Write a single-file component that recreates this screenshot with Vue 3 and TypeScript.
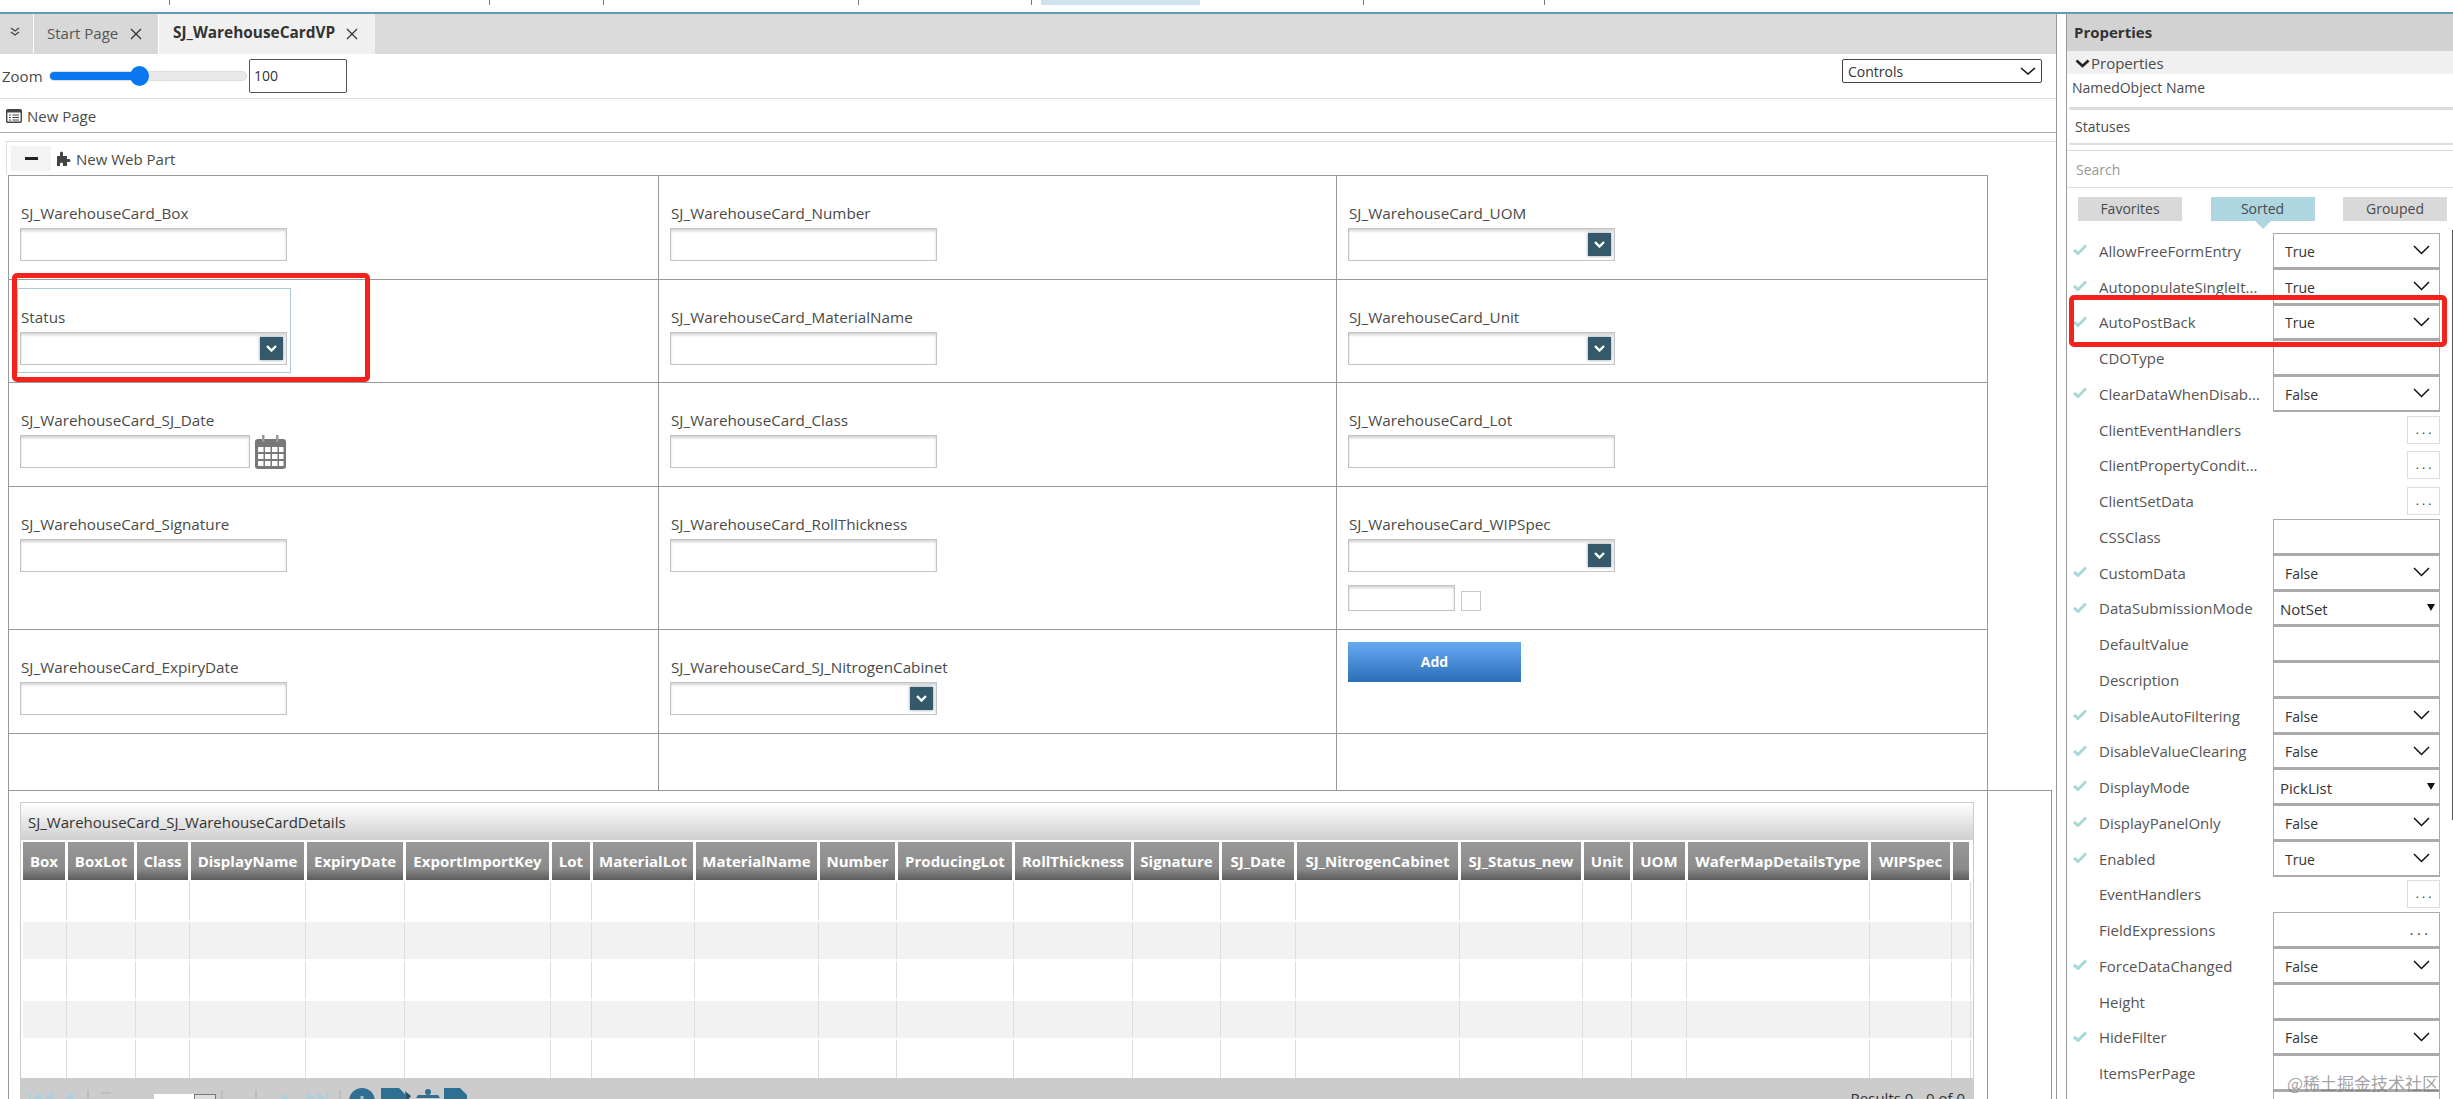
<script setup lang="ts">
type Field = { label?: string; kind?: 'input' | 'select' | 'date' | 'wip' | 'add'; selected?: boolean }
type Prop = { name: string; kind: 'drop' | 'pick' | 'text' | 'dots' | 'textdots'; value?: string; on?: boolean }

const tickGaps = [170, 320, 114, 255, 173, 332, 181]

const formRows: { h: number; cells: Field[] }[] = [
  { h: 104, cells: [{ label: 'SJ_WarehouseCard_Box', kind: 'input' }, { label: 'SJ_WarehouseCard_Number', kind: 'input' }, { label: 'SJ_WarehouseCard_UOM', kind: 'select' }] },
  { h: 103, cells: [{ label: 'Status', kind: 'select', selected: true }, { label: 'SJ_WarehouseCard_MaterialName', kind: 'input' }, { label: 'SJ_WarehouseCard_Unit', kind: 'select' }] },
  { h: 104, cells: [{ label: 'SJ_WarehouseCard_SJ_Date', kind: 'date' }, { label: 'SJ_WarehouseCard_Class', kind: 'input' }, { label: 'SJ_WarehouseCard_Lot', kind: 'input' }] },
  { h: 143, cells: [{ label: 'SJ_WarehouseCard_Signature', kind: 'input' }, { label: 'SJ_WarehouseCard_RollThickness', kind: 'input' }, { label: 'SJ_WarehouseCard_WIPSpec', kind: 'wip' }] },
  { h: 104, cells: [{ label: 'SJ_WarehouseCard_ExpiryDate', kind: 'input' }, { label: 'SJ_WarehouseCard_SJ_NitrogenCabinet', kind: 'select' }, { kind: 'add' }] },
  { h: 57, cells: [{}, {}, {}] },
]

const columns: [string, number][] = [
  ['Box', 45], ['BoxLot', 69], ['Class', 54], ['DisplayName', 116], ['ExpiryDate', 99], ['ExportImportKey', 146],
  ['Lot', 41], ['MaterialLot', 103], ['MaterialName', 124], ['Number', 78], ['ProducingLot', 117], ['RollThickness', 119],
  ['Signature', 88], ['SJ_Date', 75], ['SJ_NitrogenCabinet', 164], ['SJ_Status_new', 123], ['Unit', 49], ['UOM', 55],
  ['WaferMapDetailsType', 183], ['WIPSpec', 82], ['', 19],
]
const gridCols = columns.map((c) => c[1] + 'px').join(' ')
const rowHeights = [40, 39, 40, 39, 40]

const props: Prop[] = [
  { name: 'AllowFreeFormEntry', kind: 'drop', value: 'True', on: true },
  { name: 'AutopopulateSingleIt...', kind: 'drop', value: 'True', on: true },
  { name: 'AutoPostBack', kind: 'drop', value: 'True', on: true },
  { name: 'CDOType', kind: 'text' },
  { name: 'ClearDataWhenDisab...', kind: 'drop', value: 'False', on: true },
  { name: 'ClientEventHandlers', kind: 'dots' },
  { name: 'ClientPropertyCondit...', kind: 'dots' },
  { name: 'ClientSetData', kind: 'dots' },
  { name: 'CSSClass', kind: 'text' },
  { name: 'CustomData', kind: 'drop', value: 'False', on: true },
  { name: 'DataSubmissionMode', kind: 'pick', value: 'NotSet', on: true },
  { name: 'DefaultValue', kind: 'text' },
  { name: 'Description', kind: 'text' },
  { name: 'DisableAutoFiltering', kind: 'drop', value: 'False', on: true },
  { name: 'DisableValueClearing', kind: 'drop', value: 'False', on: true },
  { name: 'DisplayMode', kind: 'pick', value: 'PickList', on: true },
  { name: 'DisplayPanelOnly', kind: 'drop', value: 'False', on: true },
  { name: 'Enabled', kind: 'drop', value: 'True', on: true },
  { name: 'EventHandlers', kind: 'dots' },
  { name: 'FieldExpressions', kind: 'textdots' },
  { name: 'ForceDataChanged', kind: 'drop', value: 'False', on: true },
  { name: 'Height', kind: 'text' },
  { name: 'HideFilter', kind: 'drop', value: 'False', on: true },
  { name: 'ItemsPerPage', kind: 'text' },
  { name: 'MaxLength', kind: 'text' },
]
</script>

<template>
  <div class="screen">
    <div class="strip">
      <span v-for="(g, i) in tickGaps" :key="i" class="tick" :style="{ width: g + 'px' }"></span>
    </div>
    <div class="workspace">
      <div class="main">
        <div class="tabs">
          <div class="tab-menu">
            <svg width="12" height="10" viewBox="0 0 12 10" fill="none" stroke="#444" stroke-width="1.2"><path d="M2 1l4 3 4-3M2 5l4 3 4-3" /></svg>
          </div>
          <div class="tab">
            <span>Start Page</span>
            <svg class="close" width="14" height="14" viewBox="0 0 14 14" stroke="#333" stroke-width="1.3"><path d="M2 2l10 10M12 2L2 12" /></svg>
          </div>
          <div class="tab active">
            <span>SJ_WarehouseCardVP</span>
            <svg class="close" width="14" height="14" viewBox="0 0 14 14" stroke="#333" stroke-width="1.3"><path d="M2 2l10 10M12 2L2 12" /></svg>
          </div>
        </div>

        <div class="zoombar">
          <span class="zoom-label">Zoom</span>
          <div class="slider"><div class="slider-fill"></div><div class="slider-thumb"></div></div>
          <div class="zoom-input">100</div>
          <div class="controls">
            <span>Controls</span>
            <svg width="16" height="9" viewBox="0 0 16 9" fill="none" stroke="#111" stroke-width="1.5"><path d="M1 1l7 6 7-6" /></svg>
          </div>
        </div>

        <div class="pagebar">
          <svg width="16" height="14" viewBox="0 0 16 14"><rect x="0.7" y="0.7" width="14.6" height="12.6" rx="1" fill="none" stroke="#444" stroke-width="1.4" /><rect x="1" y="1" width="14" height="2.5" fill="#444" /><path d="M3 6h2M6.5 6h6.5M3 8.5h2M6.5 8.5h6.5M3 11h2M6.5 11h6.5" stroke="#444" /></svg>
          <span>New Page</span>
        </div>

        <div class="webpart">
          <div class="webpart-head">
            <div class="collapse"><span class="dash"></span></div>
            <svg width="16" height="15" viewBox="0 0 16 15" fill="#444"><path d="M1 5h3V2a1.5 1.5 0 0 1 3 0v3h4v3h2a1.5 1.5 0 0 1 0 3h-2v4H7v-2a1.5 1.5 0 0 0-3 0v2H1z" /></svg>
            <span>New Web Part</span>
          </div>

          <div class="form">
            <template v-for="(row, r) in formRows" :key="r">
              <div
                v-for="(cell, c) in row.cells"
                :key="c"
                class="cell"
                :class="{ addcell: cell.kind === 'add', selected: cell.selected }"
                :style="{ height: row.h + 'px' }"
              >
                <div v-if="cell.label" class="label">{{ cell.label }}</div>
                <div v-if="cell.kind === 'input'" class="input"></div>
                <div v-else-if="cell.kind === 'select' || cell.kind === 'wip'" class="input select">
                  <span class="arrow">
                    <svg width="11" height="8" viewBox="0 0 11 8" fill="none" stroke="#fff" stroke-width="2.4"><path d="M1 1l4.5 4.5L10 1" /></svg>
                  </span>
                </div>
                <div v-else-if="cell.kind === 'date'" class="date">
                  <div class="input narrow"></div>
                  <svg width="31" height="34" viewBox="0 0 31 34">
                    <rect x="0" y="4" width="31" height="30" rx="3" fill="#787878" />
                    <rect x="7" y="0" width="2.5" height="7" fill="#999" /><rect x="21" y="0" width="2.5" height="7" fill="#999" />
                    <g fill="#fff">
                      <rect x="3" y="12" width="5.5" height="5" /><rect x="10" y="12" width="5.5" height="5" /><rect x="17" y="12" width="5.5" height="5" /><rect x="24" y="12" width="4.5" height="5" />
                      <rect x="3" y="19" width="5.5" height="5" /><rect x="10" y="19" width="5.5" height="5" /><rect x="17" y="19" width="5.5" height="5" /><rect x="24" y="19" width="4.5" height="5" />
                      <rect x="3" y="26" width="5.5" height="5" /><rect x="10" y="26" width="5.5" height="5" /><rect x="17" y="26" width="5.5" height="5" /><rect x="24" y="26" width="4.5" height="5" />
                    </g>
                  </svg>
                </div>
                <div v-if="cell.kind === 'wip'" class="wip-extra">
                  <div class="input small"></div>
                  <div class="checkbox"></div>
                </div>
                <div v-if="cell.kind === 'add'" class="add">Add</div>
              </div>
            </template>
          </div>

          <div class="lower">
            <div class="lower-left">
              <div class="panel">
                <div class="panel-title">SJ_WarehouseCard_SJ_WarehouseCardDetails</div>
                <div class="grid-head" :style="{ gridTemplateColumns: gridCols }">
                  <div v-for="col in columns" :key="col[0]" class="th">{{ col[0] }}</div>
                </div>
                <div
                  v-for="(h, i) in rowHeights"
                  :key="i"
                  class="grid-row"
                  :class="{ alt: i % 2 === 1 }"
                  :style="{ gridTemplateColumns: gridCols, height: h + 'px' }"
                >
                  <div v-for="col in columns" :key="col[0]" class="td"></div>
                </div>
                <div class="pager">
                  <svg class="faint" width="122" height="16" viewBox="0 0 122 16" fill="#a9cfe0">
                    <rect x="0" y="3" width="2" height="10" /><path d="M12 3v10L4 8zM24 3v10l-8-5z" /><path d="M44 3v10l-8-5z" />
                    <rect x="58" y="0" width="2" height="16" fill="#bdbdbd" /><rect x="72" y="2" width="10" height="2" fill="#bdbdbd" />
                  </svg>
                  <div class="page-input"></div>
                  <div class="page-btn"></div>
                  <svg class="faint second" width="122" height="16" viewBox="0 0 122 16" fill="#a9cfe0">
                    <rect x="0" y="0" width="2" height="16" fill="#bdbdbd" /><rect x="34" y="0" width="2" height="16" fill="#bdbdbd" />
                    <path d="M60 3v10l8-5zM86 3v10l8-5zM96 3v10l8-5z" /><rect x="105" y="3" width="2" height="10" /><rect x="118" y="0" width="2" height="16" fill="#bdbdbd" />
                  </svg>
                  <svg class="tools" width="118" height="22" viewBox="0 0 118 22" fill="#2f6f91">
                    <circle cx="13" cy="14" r="13" /><rect x="11.5" y="9" width="3" height="12" fill="#9fc2d0" />
                    <path d="M32 1h18l8 8v13H32z" /><path d="M56 4l6 5-4 5z" fill="#244f66" />
                    <path d="M69 8h20l2 3H67zM71 12h16v10H71z" /><circle cx="79" cy="5" r="3" />
                    <path d="M95 1h16l7 7v14H95z" />
                  </svg>
                  <span class="results">Results 0 - 0 of 0</span>
                </div>
              </div>
            </div>
          </div>
        </div>
      </div>

      <aside class="side">
        <div class="side-title">Properties</div>
        <div class="side-sub">
          <svg width="15" height="9" viewBox="0 0 15 9" fill="none" stroke="#222" stroke-width="2.6"><path d="M1.5 1.5l6 5.5 6-5.5" /></svg>
          <span>Properties</span>
        </div>
        <div class="side-name">NamedObject Name</div>
        <div class="side-value">Statuses</div>
        <div class="side-search">Search</div>
        <div class="side-tabs">
          <div class="side-tab">Favorites</div>
          <div class="side-tab on">Sorted</div>
          <div class="side-tab">Grouped</div>
        </div>
        <div class="prop-list">
          <div v-for="p in props" :key="p.name" class="prop">
            <svg v-if="p.on" class="tick-mark" width="14" height="11" viewBox="0 0 14 11" fill="none" stroke="#a9d8d8" stroke-width="3"><path d="M1 6l4 3.5L13 1.5" /></svg>
            <span class="prop-name">{{ p.name }}</span>
            <div v-if="p.kind === 'drop'" class="prop-box">
              <span class="val">{{ p.value }}</span>
              <svg width="17" height="10" viewBox="0 0 17 10" fill="none" stroke="#111" stroke-width="1.5"><path d="M1 1l7.5 7.5L16 1" /></svg>
            </div>
            <div v-else-if="p.kind === 'pick'" class="prop-box pick">
              <span class="val">{{ p.value }}</span>
              <svg width="8" height="7" viewBox="0 0 8 7" fill="#111"><path d="M0 0h8L4 7z" /></svg>
            </div>
            <div v-else-if="p.kind === 'text'" class="prop-box"></div>
            <div v-else-if="p.kind === 'dots'" class="prop-dots"><span>. . .</span></div>
            <div v-else class="prop-box textdots"><span>. . .</span></div>
          </div>
        </div>
        <div class="side-scroll"></div>
      </aside>
    </div>

    <div class="status-frame"></div>
    <div class="red-box left-box"></div>
    <div class="red-box right-box"></div>
    <div class="watermark">@稀土掘金技术社区</div>
  </div>
</template>

<style scoped>
.screen {
  position: relative;
  width: 2453px;
  height: 1099px;
  overflow: hidden;
  background: #fff;
  font-family: "Open Sans", "Noto Sans", sans-serif;
  font-size: 15px;
  color: #4a4a4a;
  display: flex;
  flex-direction: column;
}
.strip {
  height: 12px;
  display: flex;
  align-items: flex-start;
  position: relative;
  background: linear-gradient(90deg, #fff 1041px, #cfe3ef 1041px, #cfe3ef 1200px, #fff 1200px) 0 0 / 100% 5px no-repeat;
}
.tick {
  height: 5px;
  border-right: 1px solid #777;
  box-sizing: border-box;
  flex: none;
}
.workspace {
  flex: 1;
  min-height: 0;
  display: flex;
  border-top: 2px solid #5f9db3;
}
.main {
  width: 2057px;
  flex: none;
  box-sizing: border-box;
  border-right: 1px solid #999;
  display: flex;
  flex-direction: column;
}
.tabs {
  height: 40px;
  background: #dadada;
  display: flex;
  flex: none;
}
.tab-menu {
  width: 34px;
  border-right: 1px solid #fff;
  padding: 7px 0 0 9px;
  box-sizing: border-box;
}
.tab {
  width: 125px;
  padding: 0 0 3px 13px;
  box-sizing: border-box;
  display: flex;
  align-items: center;
  gap: 11px;
  color: #555;
  background: #d8d8d8;
  border-right: 1px solid #fff;
}
.close {
  margin-top: 3px;
  flex: none;
}
.tab.active {
  width: 216px;
  padding-left: 14px;
  gap: 10px;
  background: #f0f0f0;
  border-right: 0;
  font-size: 15.4px;
  font-weight: 700;
  color: #333;
}
.zoombar {
  height: 44px;
  flex: none;
  display: flex;
  align-items: center;
  position: relative;
  border-bottom: 1px solid #ddd;
  box-sizing: content-box;
}
.zoom-label {
  width: 49px;
  padding-left: 2px;
  box-sizing: border-box;
}
.slider {
  position: relative;
  width: 198px;
  height: 10px;
  background: #e9e9e9;
  border: 1px solid #ddd;
  border-radius: 6px;
  box-sizing: border-box;
  margin-right: 2px;
}
.slider-fill {
  width: 88px;
  height: 100%;
  background: #0a76f0;
  border-radius: 6px;
}
.slider-thumb {
  position: absolute;
  left: 80px;
  top: -6px;
  width: 19px;
  height: 20px;
  border-radius: 50%;
  background: #0a76f0;
}
.zoom-input {
  width: 98px;
  height: 34px;
  border: 1px solid #555;
  border-radius: 2px;
  box-sizing: border-box;
  padding: 6px 4px;
  color: #333;
  font-size: 14px;
}
.controls {
  margin-left: auto;
  margin-right: 14px;
  margin-bottom: 10px;
  width: 200px;
  height: 24px;
  box-sizing: border-box;
  border: 1px solid #444;
  border-radius: 2px;
  padding: 0 5px;
  display: flex;
  align-items: center;
  justify-content: space-between;
  color: #333;
  font-size: 14px;
}
.pagebar {
  height: 33px;
  flex: none;
  display: flex;
  align-items: center;
  gap: 5px;
  padding-left: 6px;
  border-bottom: 1px solid #aaa;
}
.webpart {
  margin: 8px 0 0 6px;
  flex: 1;
  min-height: 0;
  border-top: 1px solid #ddd;
  display: flex;
  flex-direction: column;
}
.webpart-head {
  height: 33px;
  flex: none;
  display: flex;
  align-items: center;
  gap: 4px;
  padding-left: 4px;
  border-left: 1px solid #ddd;
  box-sizing: border-box;
}
.collapse {
  width: 40px;
  height: 25px;
  background: #f3f3f3;
  display: flex;
  align-items: center;
  justify-content: center;
  margin-right: 1px;
}
.dash {
  width: 13px;
  height: 3px;
  background: #222;
}
.form {
  margin-left: 2px;
  width: 1980px;
  box-sizing: border-box;
  border-left: 1px solid #999;
  display: grid;
  grid-template-columns: 650px 678px 651px;
  flex: none;
}
.cell {
  position: relative;
  box-sizing: border-box;
  border-top: 1px solid #999;
  border-right: 1px solid #999;
  padding: 28px 0 0 11px;
}
.cell.addcell {
  padding-top: 12px;
}
.label {
  height: 20px;
  line-height: 19px;
  margin-bottom: 4px;
  padding-left: 1px;
  font-size: 15.25px;
  white-space: nowrap;
}
.input {
  width: 267px;
  height: 33px;
  box-sizing: border-box;
  border: 1px solid #c4c4c4;
  box-shadow: inset 0 2px 3px rgba(0, 0, 0, 0.18);
  background: #fff;
}
.input.select {
  display: flex;
  align-items: center;
  justify-content: flex-end;
  padding-right: 3px;
}
.arrow {
  width: 23px;
  height: 23px;
  background: #33596b;
  box-shadow: 0 0 3px rgba(51, 89, 107, 0.6);
  display: flex;
  align-items: center;
  justify-content: center;
}
.date {
  display: flex;
  align-items: flex-start;
  gap: 5px;
}
.input.narrow {
  width: 230px;
}
.wip-extra {
  display: flex;
  align-items: flex-end;
  gap: 6px;
  margin-top: 13px;
}
.input.small {
  width: 107px;
  height: 26px;
}
.checkbox {
  width: 20px;
  height: 20px;
  box-sizing: border-box;
  border: 1px solid #c8c8c8;
}
.add {
  width: 173px;
  height: 40px;
  padding-bottom: 2px;
  box-sizing: border-box;
  background: linear-gradient(#67a9f2, #2b6fb9);
  color: #fff;
  font-size: 14px;
  font-weight: 700;
  display: flex;
  align-items: center;
  justify-content: center;
}
.lower {
  margin-left: 2px;
  flex: 1;
  min-height: 0;
  width: 2044px;
  box-sizing: border-box;
  border-top: 1px solid #999;
  border-left: 1px solid #999;
  border-right: 1px solid #999;
}
.lower-left {
  width: 1979px;
  height: 100%;
  box-sizing: border-box;
  border-right: 1px solid #999;
  padding: 11px 0 0 11px;
}
.panel {
  width: 1954px;
  box-sizing: border-box;
  border: 1px solid #ccc;
  border-bottom: 0;
}
.panel-title {
  height: 37px;
  line-height: 38px;
  padding-left: 7px;
  background: linear-gradient(#fff, #cfcfcf);
  color: #333;
}
.grid-head {
  display: grid;
  margin: 2px 0 0 2px;
  height: 38px;
}
.th {
  box-sizing: border-box;
  border-right: 3px solid #fff;
  background: linear-gradient(#999, #8a8a8a 70%, #5c5c5c);
  color: #fff;
  font-weight: 700;
  line-height: 38px;
  text-align: center;
  white-space: nowrap;
  overflow: hidden;
}
.grid-row {
  display: grid;
  margin-left: 2px;
  box-sizing: border-box;
  border-top: 2px solid #fff;
}
.grid-row.alt {
  background: #f2f2f2;
}
.td {
  box-sizing: border-box;
  border-right: 1px solid #ddd;
  margin-right: 1px;
}
.pager {
  height: 30px;
  background: #ccc;
  display: flex;
  align-items: flex-start;
  padding: 0 8px 0 8px;
  position: relative;
}
.faint {
  margin-top: 12px;
  flex: none;
}
.faint.second {
  margin-left: 5px;
}
.page-input {
  width: 40px;
  height: 20px;
  margin: 16px 0 0 3px;
  background: #fff;
  flex: none;
}
.page-btn {
  width: 22px;
  height: 20px;
  margin-top: 16px;
  box-sizing: border-box;
  border: 1px solid #777;
  background: #ddd;
  flex: none;
}
.tools {
  margin: 9px 0 0 6px;
  flex: none;
}
.results {
  margin-left: auto;
  line-height: 20px;
  margin-top: 10px;
  color: #333;
}
.side {
  flex: 1;
  margin-left: 9px;
  border-left: 1px solid #999;
  position: relative;
  min-width: 0;
}
.side-title {
  height: 37px;
  line-height: 37px;
  padding-left: 7px;
  background: #d2d2d2;
  font-weight: 700;
  color: #333;
}
.side-sub {
  height: 23px;
  padding-top: 1px;
  box-sizing: border-box;
  background: #f0f0f0;
  display: flex;
  align-items: center;
  gap: 1px;
  padding-left: 8px;
}
.side-name {
  height: 33px;
  line-height: 28px;
  padding-left: 5px;
  font-size: 14px;
}
.side-value {
  height: 38px;
  box-sizing: border-box;
  border-top: 3px solid #ddd;
  border-bottom: 2px solid #ddd;
  margin-left: 2px;
  line-height: 34px;
  padding-left: 6px;
  font-size: 14px;
}
.side-search {
  margin-top: 5px;
  height: 38px;
  box-sizing: border-box;
  border-top: 1px solid #ddd;
  border-bottom: 1px solid #ddd;
  line-height: 38px;
  padding-left: 9px;
  color: #999;
  font-size: 14px;
}
.side-tabs {
  display: flex;
  justify-content: space-between;
  padding: 9px 6px 0 11px;
  height: 45px;
  box-sizing: border-box;
  font-size: 14px;
}
.side-tab {
  width: 104px;
  height: 24px;
  line-height: 24px;
  text-align: center;
  background: #d9d9d9;
  position: relative;
}
.side-tab.on {
  background: #aed6e0;
}
.side-tab.on::after {
  content: "";
  position: absolute;
  left: 44px;
  top: 24px;
  border-left: 8px solid transparent;
  border-right: 8px solid transparent;
  border-top: 8px solid #aed6e0;
}
.prop {
  height: 35.75px;
  position: relative;
  display: flex;
  align-items: center;
  padding-left: 32px;
}
.tick-mark {
  position: absolute;
  left: 6px;
  top: 11px;
}
.prop-name {
  width: 174px;
  flex: none;
  white-space: nowrap;
  overflow: hidden;
  color: #555;
}
.prop-box {
  width: 167px;
  height: 100%;
  box-sizing: border-box;
  border: 1px solid #aaa;
  border-bottom-width: 2px;
  display: flex;
  align-items: center;
  justify-content: space-between;
  padding: 0 9px 0 11px;
  color: #333;
  font-size: 14px;
}
.val {
  padding-top: 2px;
}
.prop-box.pick {
  padding: 0 4px 0 6px;
  font-size: 15px;
}
.prop-box.textdots {
  justify-content: flex-end;
  padding-right: 11px;
}
.prop-dots {
  margin-left: 134px;
  width: 33px;
  height: 28px;
  box-sizing: border-box;
  border: 1px solid #ddd;
  text-align: center;
  line-height: 26px;
  color: #333;
  font-size: 12px;
}
.side-scroll {
  position: absolute;
  right: 0;
  top: 216px;
  width: 1px;
  height: 590px;
  background: #555;
}
.status-frame {
  position: absolute;
  left: 17px;
  top: 288px;
  width: 274px;
  height: 85px;
  box-sizing: border-box;
  border: 1px solid #a9cbd6;
}
.red-box {
  position: absolute;
  box-sizing: border-box;
  border: 5px solid #f5221b;
  border-radius: 5px;
}
.left-box {
  left: 12px;
  top: 273px;
  width: 358px;
  height: 109px;
}
.right-box {
  left: 2069px;
  top: 295px;
  width: 378px;
  height: 52px;
}
.watermark {
  position: absolute;
  left: 2287px;
  top: 1071px;
  font-family: "Noto Sans CJK SC", sans-serif;
  font-size: 17px;
  line-height: 24px;
  color: rgba(110, 110, 110, 0.65);
  white-space: nowrap;
}
</style>
